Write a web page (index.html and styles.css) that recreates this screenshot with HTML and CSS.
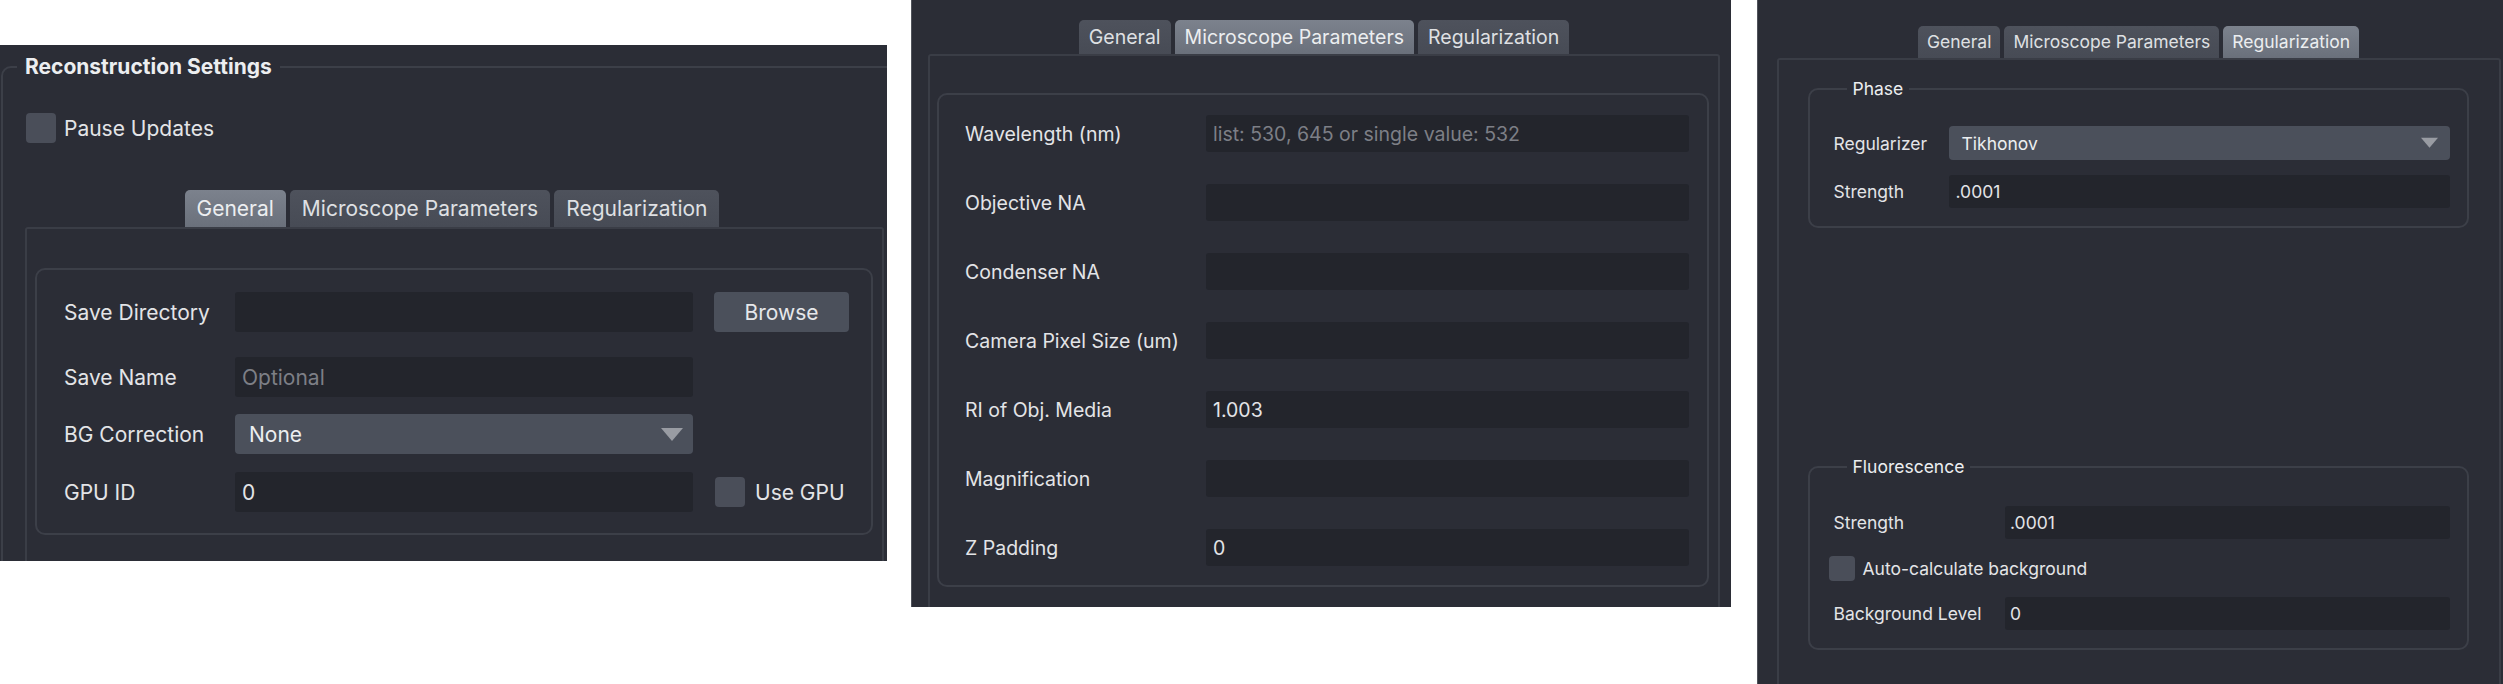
FILE: index.html
```html
<!DOCTYPE html>
<html lang="en">
<head>
<meta charset="utf-8">
<title>Reconstruction Settings</title>
<link rel="stylesheet" href="styles.css">
</head>
<body>
  <section class="panel panel-general">
    <fieldset class="group group-main">
      <legend class="group-title">Reconstruction Settings</legend>
      <label class="check check-pause"><span class="box"></span><span>Pause Updates</span></label>
      <div class="tabwidget tabwidget-general">
        <div class="tabbar">
          <span class="tab tab-active">General</span>
          <span class="tab">Microscope Parameters</span>
          <span class="tab">Regularization</span>
        </div>
        <div class="tabpane">
          <div class="frame frame-general">
            <div class="row row-first">
              <span class="label">Save Directory</span>
              <input class="field" type="text">
              <button class="button">Browse</button>
            </div>
            <div class="row row-gap17">
              <span class="label">Save Name</span>
              <input class="field" type="text" placeholder="Optional">
            </div>
            <div class="row row-gap18">
              <span class="label">BG Correction</span>
              <div class="combo"><span>None</span><svg class="arrow" viewBox="0 0 22 13"><polygon points="0,0 22,0 11,13"/></svg></div>
            </div>
            <div class="row">
              <span class="label">GPU ID</span>
              <input class="field" type="text" value="0">
              <label class="check check-gpu"><span class="box"></span><span>Use GPU</span></label>
            </div>
          </div>
        </div>
      </div>
    </fieldset>
  </section>

  <section class="panel panel-micro">
    <div class="tabwidget tabwidget-micro">
      <div class="tabbar">
        <span class="tab">General</span>
        <span class="tab tab-active">Microscope Parameters</span>
        <span class="tab">Regularization</span>
      </div>
      <div class="tabpane">
        <div class="frame frame-micro">
          <div class="row"><span class="label">Wavelength (nm)</span><input class="field" type="text" placeholder="list: 530, 645 or single value: 532"></div>
          <div class="row"><span class="label">Objective NA</span><input class="field" type="text"></div>
          <div class="row"><span class="label">Condenser NA</span><input class="field" type="text"></div>
          <div class="row"><span class="label">Camera Pixel Size (um)</span><input class="field" type="text"></div>
          <div class="row"><span class="label">RI of Obj. Media</span><input class="field" type="text" value="1.003"></div>
          <div class="row"><span class="label">Magnification</span><input class="field" type="text"></div>
          <div class="row"><span class="label">Z Padding</span><input class="field" type="text" value="0"></div>
        </div>
      </div>
    </div>
  </section>

  <section class="panel panel-reg">
    <div class="tabwidget tabwidget-reg">
      <div class="tabbar">
        <span class="tab">General</span>
        <span class="tab">Microscope Parameters</span>
        <span class="tab tab-active">Regularization</span>
      </div>
      <div class="tabpane">
        <fieldset class="group group-sub group-phase">
          <legend class="group-title">Phase</legend>
          <div class="row row-combo">
            <span class="label">Regularizer</span>
            <div class="combo"><span>Tikhonov</span><svg class="arrow" viewBox="0 0 22 13"><polygon points="0,0 22,0 11,13"/></svg></div>
          </div>
          <div class="row">
            <span class="label">Strength</span>
            <input class="field" type="text" value=".0001">
          </div>
        </fieldset>
        <fieldset class="group group-sub group-fluo">
          <legend class="group-title">Fluorescence</legend>
          <div class="row">
            <span class="label">Strength</span>
            <input class="field" type="text" value=".0001">
          </div>
          <label class="check check-auto"><span class="box"></span><span>Auto-calculate background</span></label>
          <div class="row">
            <span class="label">Background Level</span>
            <input class="field" type="text" value="0">
          </div>
        </fieldset>
      </div>
    </div>
  </section>
</body>
</html>
```

FILE: styles.css
```css
* { box-sizing: border-box; }

body {
  margin: 0;
  width: 2503px;
  height: 684px;
  overflow: hidden;
  background: #ffffff;
  display: flex;
  align-items: flex-start;
  font-family: Inter, "Noto Sans", "Liberation Sans", sans-serif;
  color: #e3e4e7;
}

.panel {
  flex: none;
  background: #2b2d36;
  overflow: hidden;
}

.panel-general {
  width: 887px;
  height: 516px;
  margin-top: 45px;
  font-size: 21px;
}

.panel-micro {
  width: 820px;
  height: 607px;
  margin-left: 24px;
  border-left: 1px solid #50535b;
  font-size: 19.5px;
}

.panel-reg {
  width: 746px;
  height: 684px;
  margin-left: 26px;
  border-left: 1px solid #50535b;
  font-size: 17.5px;
}

/* group boxes */
.group {
  margin: 0;
  padding: 0;
  min-width: 0;
  border: 2px solid #3c3f48;
  border-radius: 10px;
}

.group-title {
  line-height: 26px;
  padding: 0 8px;
  color: #eceef0;
}

.group-main {
  width: 960px;
  height: 620px;
  margin: 9px 0 0 1px;
}

.group-main > .group-title {
  margin-left: 14px;
  font-weight: 700;
}

/* checkboxes */
.check {
  display: flex;
  align-items: center;
  gap: 8px;
  white-space: nowrap;
}

.box {
  flex: none;
  width: 30px;
  height: 30px;
  border-radius: 4px;
  background: #4a4e59;
}

.check-pause {
  margin: 33px 0 0 23px;
}

.check-gpu {
  margin-left: 22px;
  gap: 10px;
}

/* tab widget */
.tabwidget {
  display: flex;
  flex-direction: column;
}

.tabbar {
  display: flex;
  justify-content: center;
  gap: 4px;
}

.tab {
  display: flex;
  align-items: center;
  padding: 0 11px;
  border-radius: 5px 5px 0 0;
  background: linear-gradient(#4e525c, #474b55);
  color: #dfe0e3;
  white-space: nowrap;
}

.tab-active {
  background: linear-gradient(#7c828d, #6a707b);
  color: #eceef0;
}

.tabpane {
  border: 2px solid #3a3d46;
  border-bottom: none;
  border-radius: 3px 3px 0 0;
}

.tabwidget-general {
  width: 859px;
  margin: 47px 0 0 22px;
}

.tabwidget-general .tabbar { margin-right: 5px; }

.tabwidget-general .tab { height: 37px; padding: 0 12px; }

.tabwidget-general .tabpane {
  height: 400px;
  padding: 39px 9px 0 8px;
}

.tabwidget-micro {
  width: 792px;
  margin: 20px 0 0 16px;
}

.tabwidget-micro .tab { height: 34px; padding: 0 10px; }

.tabwidget-micro .tabpane {
  height: 560px;
  padding: 37px 9px 0 7px;
}

.tabwidget-reg {
  width: 724px;
  margin: 26px 0 0 18.5px;
}

.tabwidget-reg .tab { height: 31.5px; padding: 0 9px; }

.tabwidget-reg .tabpane {
  height: 640px;
  padding: 0 29.5px;
}

/* inner frames */
.frame {
  border: 2px solid #3c3f48;
  border-radius: 10px;
  display: flex;
  flex-direction: column;
}

.frame-general {
  padding: 22px 0 21px 27px;
}

.frame-micro {
  padding: 20px 0 19px 26px;
  gap: 32px;
}

/* rows */
.row {
  display: flex;
  align-items: center;
  white-space: nowrap;
}

.label {
  flex: none;
}

.field {
  flex: none;
  border: none;
  outline: none;
  margin: 0;
  border-radius: 3px;
  background: #23252c;
  color: #e3e4e7;
  font: inherit;
}

.field::placeholder {
  color: #7d7f86;
}

.combo {
  flex: none;
  display: flex;
  align-items: center;
  justify-content: space-between;
  border-radius: 4px;
  background: #4b505b;
  color: #eceef0;
}

.arrow {
  fill: #999ca3;
}

.button {
  flex: none;
  border: none;
  margin: 0;
  border-radius: 4px;
  background: #4b505b;
  color: #e6e7ea;
  font: inherit;
}

/* panel 1 rows */
.frame-general .row { height: 40px; }
.frame-general .label { width: 171px; }
.frame-general .field,
.frame-general .combo { width: 458px; height: 40px; }
.frame-general .field { padding: 0 7px; }
.frame-general .combo { padding: 0 10px 0 14px; }
.frame-general .arrow { width: 22px; height: 13px; }
.frame-general .button { width: 135px; height: 40px; margin-left: 21px; }
.row-first { margin-bottom: 25px; }
.row-gap17 { margin-bottom: 17px; }
.row-gap18 { margin-bottom: 18px; }

/* panel 2 rows */
.frame-micro .row { height: 37px; }
.frame-micro .label { width: 241px; }
.frame-micro .field { width: 483px; height: 37px; padding: 0 7px; }

/* panel 3 groups */
.group-sub > .group-title {
  line-height: 20px;
  margin-left: 13px;
  padding: 0 6px;
}

.group-phase {
  margin-top: 19px;
  padding: 0 17.5px 18px 23.5px;
}

.group-phase .row-combo { margin-top: 27.7px; margin-bottom: 15px; }
.group-phase .label { width: 115.5px; }
.group-phase .combo { width: 500.5px; height: 34px; padding: 0 11.5px 0 12.5px; }
.group-phase .field { width: 500.5px; height: 33.3px; padding: 0 6.5px; }
.group-sub .arrow { width: 17px; height: 11.5px; }

.group-fluo {
  margin-top: 229px;
  padding: 28.4px 17.5px 17.4px 23.5px;
}

.group-fluo .label { width: 171.5px; }
.group-fluo .field { width: 444.5px; height: 33.3px; padding: 0 5px; }

.check-auto {
  margin: 16.7px 0 16.3px -4.5px;
  gap: 7.5px;
}

.check-auto .box { width: 26px; height: 25px; }
```
